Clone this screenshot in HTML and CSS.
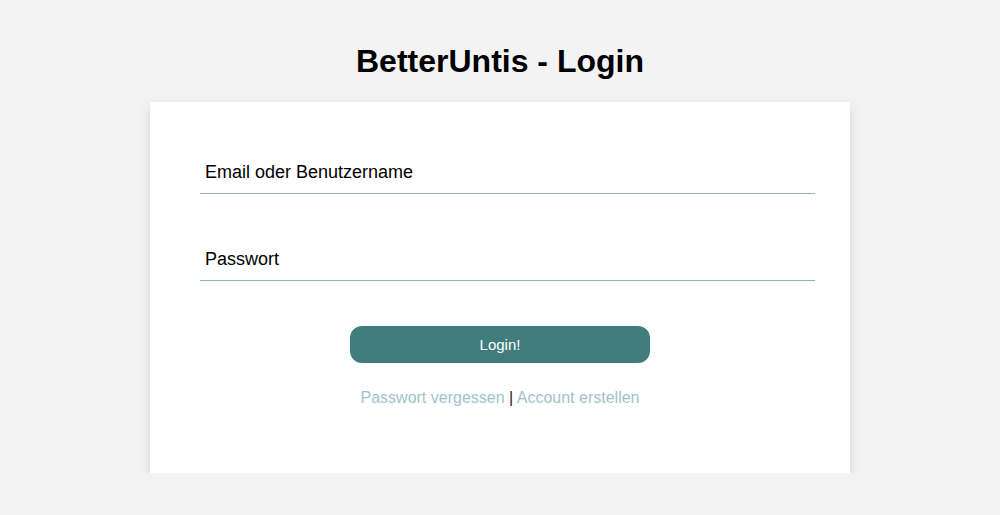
FILE: index.html
```html
<!DOCTYPE html>
<html lang="de">
<head>
<meta charset="utf-8">
<title>BetterUntis - Login</title>
<link rel="stylesheet" href="styles.css">
</head>
<body>
<h1 class="title">BetterUntis - Login</h1>
<main class="card">
  <form class="form">
    <input class="field field-user" type="text" placeholder="Email oder Benutzername">
    <input class="field field-pass" type="password" placeholder="Passwort">
    <button class="btn" type="button">Login!</button>
    <p class="links"><a href="#">Passwort vergessen</a> <span class="sep">|</span> <a href="#">Account erstellen</a></p>
  </form>
</main>
</body>
</html>
```
FILE: styles.css
```css
html, body {
  margin: 0;
  padding: 0;
}
body {
  background: #f3f3f3;
  font-family: "Liberation Sans", Arial, sans-serif;
  color: #000;
}
.title {
  margin: 43px 0 22px;
  font-size: 32px;
  line-height: 37px;
  font-weight: bold;
  text-align: center;
}
.card {
  box-sizing: border-box;
  width: 700px;
  height: 371px;
  margin: 0 auto;
  padding: 50px 35px 0 50px;
  background: #fff;
  box-shadow: 0 4px 10px rgba(0, 0, 0, 0.13);
}
.form {
  display: flex;
  flex-direction: column;
  align-items: flex-start;
}
.field {
  box-sizing: border-box;
  width: 615px;
  height: 42px;
  padding: 0 5px 1px;
  margin: 0;
  border: none;
  border-bottom: 1px solid #9fb1b4;
  outline: none;
  background: transparent;
  font-family: "Liberation Sans", Arial, sans-serif;
  font-size: 18px;
  color: #000;
}
.field::placeholder {
  color: #000;
  opacity: 1;
}
.field-pass {
  height: 41px;
  padding-bottom: 1px;
  margin-top: 46px;
  border-bottom-color: #88b7b7;
}
.btn {
  align-self: flex-start;
  margin: 45px 0 0 150px;
  width: 300px;
  height: 37px;
  border: none;
  border-radius: 12px;
  background: #407d7c;
  color: #fff;
  font-family: "Liberation Sans", Arial, sans-serif;
  font-size: 15px;
  cursor: pointer;
}
.links {
  width: 600px;
  margin: 26px 0 0;
  text-align: center;
  font-size: 16px;
  line-height: 18px;
}
.links a {
  color: #9ec3cc;
  text-decoration: none;
}
.sep {
  color: #2a1a0a;
}
```
